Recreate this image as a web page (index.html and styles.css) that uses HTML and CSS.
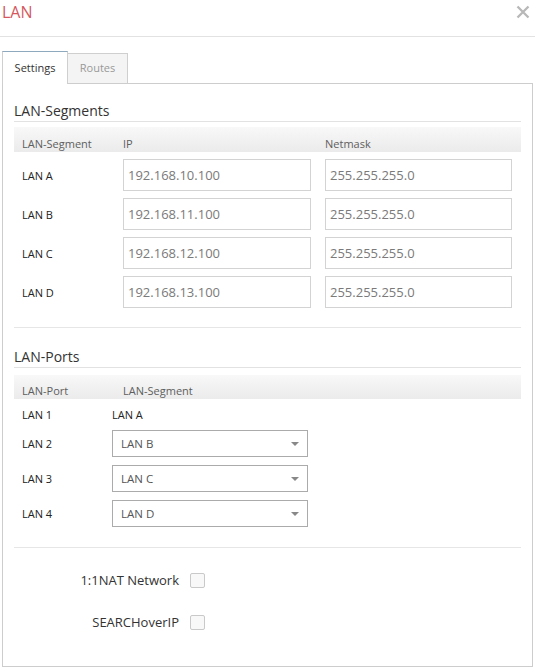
FILE: index.html
```html
<!DOCTYPE html>
<html lang="en">
<head>
<meta charset="utf-8">
<title>LAN</title>
<link rel="stylesheet" href="styles.css">
</head>
<body>
<div class="dialog">
  <div class="titlebar">
    <span class="title">LAN</span>
    <svg class="close" viewBox="0 0 14 14" aria-label="Close"><path d="M1.5 1.5 L12.5 12.5 M12.5 1.5 L1.5 12.5"/></svg>
  </div>
  <div class="tabs">
    <div class="tab active">Settings</div>
    <div class="tab">Routes</div>
  </div>
  <div class="panel">
    <h3 class="section-title">LAN-Segments</h3>
    <div class="grid-head seg-grid"><span>LAN-Segment</span><span>IP</span><span>Netmask</span></div>
    <div class="seg-rows">
      <div class="seg-grid seg-row"><span class="label">LAN A</span><input class="field ip" value="192.168.10.100"><input class="field mask" value="255.255.255.0"></div>
      <div class="seg-grid seg-row"><span class="label">LAN B</span><input class="field ip" value="192.168.11.100"><input class="field mask" value="255.255.255.0"></div>
      <div class="seg-grid seg-row"><span class="label">LAN C</span><input class="field ip" value="192.168.12.100"><input class="field mask" value="255.255.255.0"></div>
      <div class="seg-grid seg-row"><span class="label">LAN D</span><input class="field ip" value="192.168.13.100"><input class="field mask" value="255.255.255.0"></div>
    </div>
    <hr class="divider">
    <h3 class="section-title">LAN-Ports</h3>
    <div class="grid-head port-grid head2"><span>LAN-Port</span><span class="indent">LAN-Segment</span></div>
    <div class="port-rows">
      <div class="port-grid port-row plain"><span>LAN 1</span><span>LAN A</span></div>
      <div class="port-grid port-row sel"><span>LAN 2</span><div class="select"><span>LAN B</span><svg class="caret" viewBox="0 0 8 4"><path d="M0 0 H8 L4 4 Z"/></svg></div></div>
      <div class="port-grid port-row sel"><span>LAN 3</span><div class="select"><span>LAN C</span><svg class="caret" viewBox="0 0 8 4"><path d="M0 0 H8 L4 4 Z"/></svg></div></div>
      <div class="port-grid port-row sel"><span>LAN 4</span><div class="select"><span>LAN D</span><svg class="caret" viewBox="0 0 8 4"><path d="M0 0 H8 L4 4 Z"/></svg></div></div>
    </div>
    <hr class="divider divider2">
    <div class="checks">
      <div class="check-row"><span class="check-label">1:1NAT Network</span><span class="checkbox"></span></div>
      <div class="check-row"><span class="check-label">SEARCHoverIP</span><span class="checkbox"></span></div>
    </div>
  </div>
</div>
</body>
</html>
```
FILE: styles.css
```css
* { box-sizing: border-box; }

body {
  margin: 0;
  width: 535px;
  height: 670px;
  overflow: hidden;
  background: #fff;
  color: #333;
  font-family: "Open Sans", "Noto Sans", sans-serif;
}

.titlebar {
  height: 37px;
  border-bottom: 1px solid #e2e2e2;
  display: flex;
  justify-content: space-between;
  align-items: flex-start;
  padding: 0 5px 0 2px;
}

.title {
  font-size: 16px;
  line-height: 24px;
  color: #d4585d;
}

.close {
  width: 14px;
  height: 14px;
  margin-top: 5px;
  fill: none;
  stroke: #b8b8b8;
  stroke-width: 2.3;
}

.tabs {
  display: flex;
  align-items: flex-end;
  height: 32px;
  margin: 14px 0 0 2px;
  position: relative;
  z-index: 1;
}

.tab {
  font-size: 11px;
  display: flex;
  align-items: center;
  justify-content: center;
  height: 30px;
  width: 60px;
  border: 1px solid #cfcfcf;
  border-left: none;
  border-bottom: none;
  background: #f4f4f4;
  color: #999;
  padding-bottom: 3px;
}

.tab.active {
  width: 66px;
  height: 33px;
  margin-bottom: -1px;
  border-left: 1px solid #cfcfcf;
  border-top: 1px solid #8ea8bd;
  background: #fff;
  color: #333;
  padding-bottom: 1px;
}

.panel {
  margin: 0 2px;
  border: 1px solid #cdcdcd;
  padding: 0 11px 30px;
  background: #fff;
}

.section-title {
  margin: 18px 0 0;
  font-size: 14px;
  line-height: 21px;
  font-weight: 400;
  color: #333;
  border-bottom: 1px solid #e2e2e2;
}

.panel > .section-title:first-child {
  margin-top: 16px;
}

.grid-head {
  margin-top: 5px;
  height: 25px;
  padding-top: 8px;
  line-height: 16px;
  font-size: 11px;
  color: #5e5e5e;
  background: linear-gradient(#f8f8f8, #ebebeb);
}

.grid-head.head2 {
  margin-top: 7px;
  height: 24px;
}

.seg-grid {
  display: grid;
  grid-template-columns: 101px 202px 187px;
  padding-left: 8px;
  align-items: center;
}

.seg-rows {
  margin-top: 7px;
  display: flex;
  flex-direction: column;
  gap: 7px;
}

.seg-row .label {
  font-size: 11px;
  color: #222;
}

.field {
  height: 32px;
  width: 188px;
  margin: 0;
  border: 1px solid #d3d3d3;
  border-radius: 0;
  padding: 0 4px;
  font-family: "Open Sans", "Noto Sans", sans-serif;
  font-size: 13px;
  color: #7a7a7a;
  background: #fff;
  outline: none;
}

.field.mask {
  width: 187px;
}

.divider {
  border: 0;
  border-top: 1px solid #e6e6e6;
  margin: 19px 0 0;
  height: 0;
}

.divider2 {
  margin-top: 20px;
}

.port-grid {
  display: grid;
  grid-template-columns: 90px 196px;
  padding-left: 8px;
  align-items: center;
}

.indent {
  padding-left: 11px;
}

.port-row {
  font-size: 11px;
  color: #222;
}

.port-row.plain {
  height: 31px;
}

.port-row.sel {
  height: 27px;
  margin-bottom: 8px;
}

.port-row.sel:last-child {
  margin-bottom: 0;
}

.select {
  height: 27px;
  border: 1px solid #ababab;
  background: #fff;
  display: flex;
  align-items: center;
  justify-content: space-between;
  padding: 0 8px;
  font-size: 11.5px;
  color: #555;
}

.caret {
  width: 8px;
  height: 4px;
  fill: #888;
}

.checks {
  margin-top: 18px;
  display: flex;
  flex-direction: column;
  gap: 14px;
}

.check-row {
  display: grid;
  grid-template-columns: 165px 15px;
  column-gap: 11px;
  align-items: center;
  height: 28px;
}

.check-label {
  text-align: right;
  font-size: 13px;
  color: #333;
}

.checkbox {
  width: 15px;
  height: 15px;
  border: 1px solid #c9c9c9;
  border-radius: 2px;
  background: #f8f8f8;
}
```
